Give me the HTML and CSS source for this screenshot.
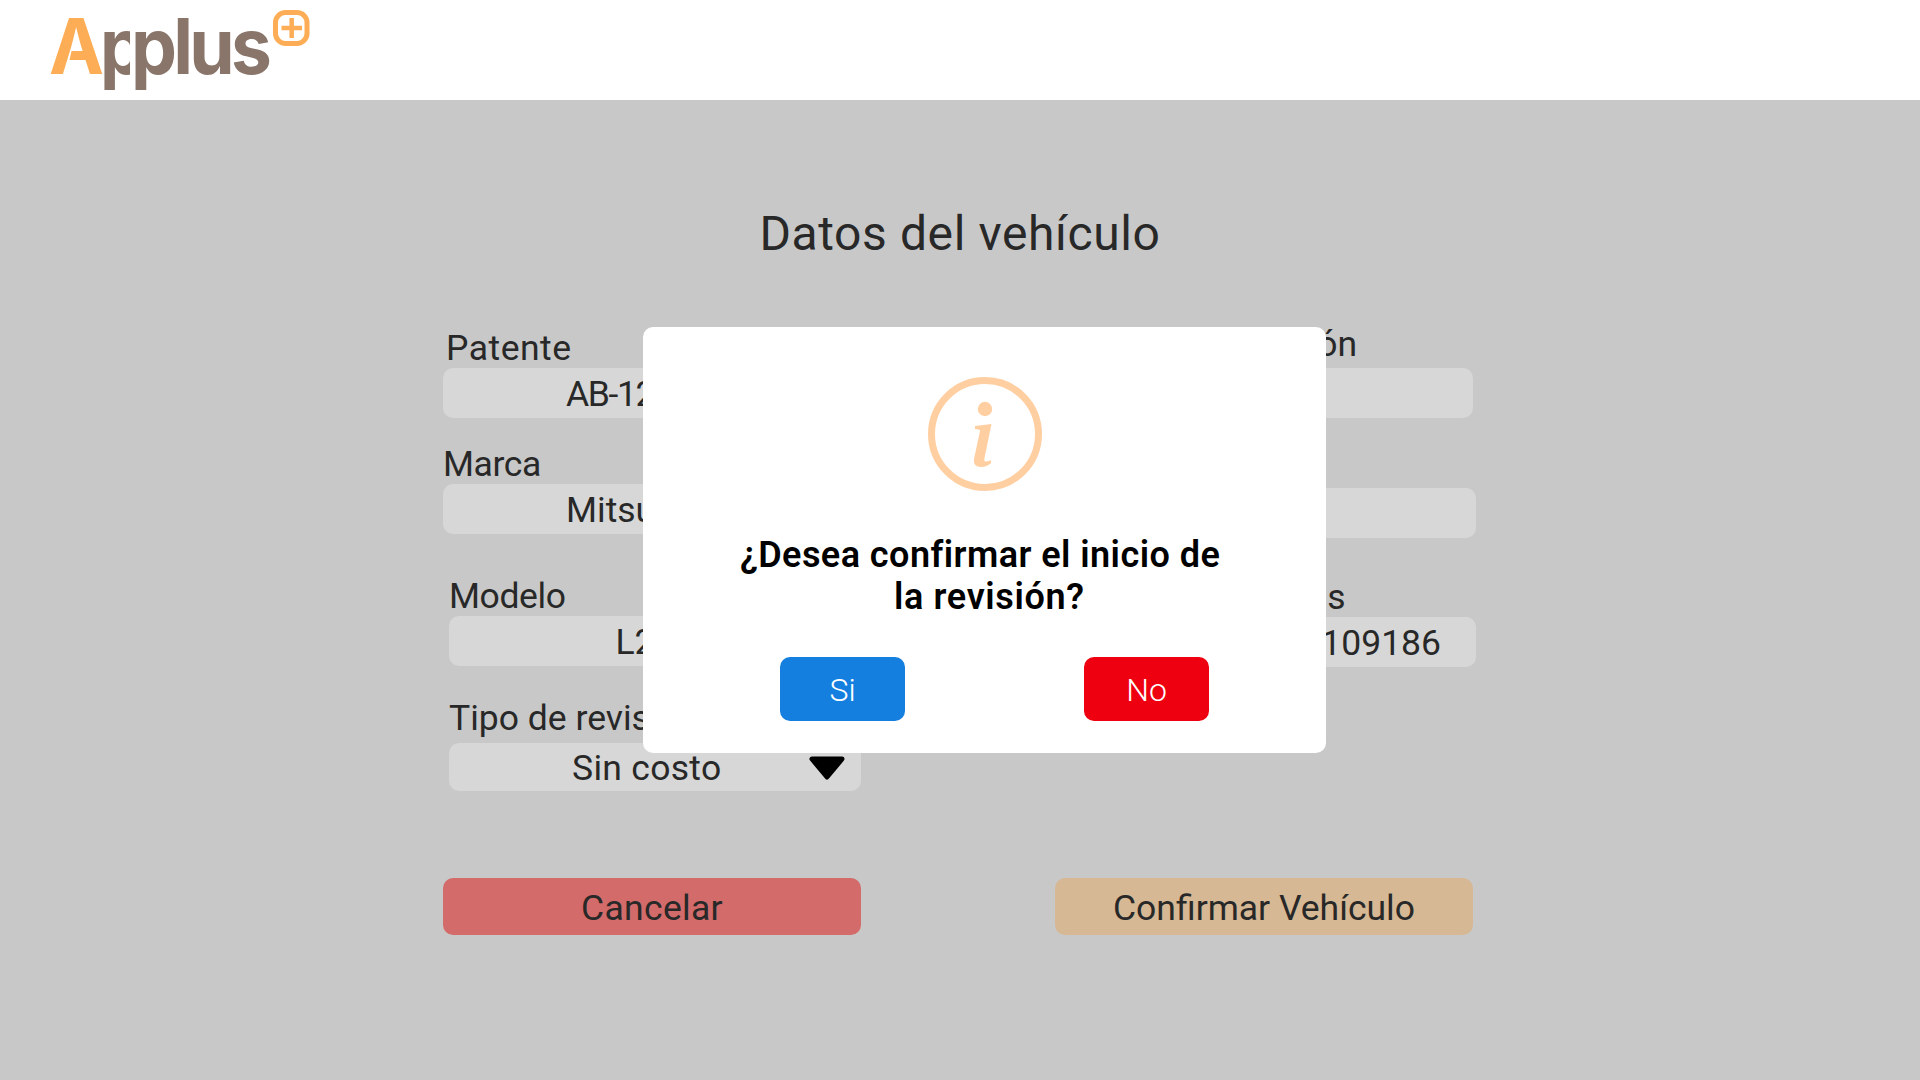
FILE: index.html
```html
<!DOCTYPE html>
<html lang="es">
<head>
<meta charset="utf-8">
<title>Applus+ | Datos del vehículo</title>
<link rel="stylesheet" href="styles.css">
</head>
<body>
<header class="topbar">
  <svg class="logo" width="262" height="92" viewBox="0 0 262 92" role="img" aria-label="Applus+">
    <defs><clipPath id="open-p"><rect x="50" y="20" width="30" height="72"/></clipPath></defs>
    <text class="logo-a" x="-1" y="74" textLength="55" lengthAdjust="spacingAndGlyphs">Λ</text>
    <path d="M21.500 51H38L42 60H19.500Z" fill="#fcad56"/>
    <g class="logo-text">
      <text x="50" y="74" textLength="45" lengthAdjust="spacingAndGlyphs" clip-path="url(#open-p)">p</text>
      <text class="logo-plus" x="81" y="74" textLength="137" lengthAdjust="spacingAndGlyphs">plus</text>
    </g>
    <rect x="225.500" y="12.500" width="31.500" height="31" rx="10" fill="none" stroke="#fcad56" stroke-width="5"/>
    <path d="M231.500 28H252M241.700 18V38" stroke="#fcad56" stroke-width="4.500"/>
  </svg>
</header>
<main class="page">
  <h1 class="title">Datos del vehículo</h1>
  <form class="form">
    <div class="column">
      <div class="field patente"><label>Patente</label><div class="input start plate">AB-12-34</div></div>
      <div class="field marca"><label>Marca</label><div class="input start">Mitsubishi</div></div>
      <div class="field modelo"><label>Modelo</label><div class="input">L200</div></div>
      <div class="field tipo"><label>Tipo de revisión</label>
        <div class="input select"><span>Sin costo</span>
          <svg class="caret" width="36" height="24" viewBox="0 0 36 24"><path d="M3 3H33L18 21Z" stroke="#000" stroke-width="5" stroke-linejoin="round"/></svg>
        </div>
      </div>
      <button type="button" class="action cancel">Cancelar</button>
    </div>
    <div class="column">
      <div class="field fabricacion"><label>Fabricación</label><div class="input"></div></div>
      <div class="field color"><label>Color</label><div class="input"></div></div>
      <div class="field kilometros"><label>Kilómetros</label><div class="input end">1109186</div></div>
      <button type="button" class="action confirm">Confirmar Vehículo</button>
    </div>
  </form>
</main>
<section class="modal" role="dialog">
  <svg class="info" width="114" height="114" viewBox="0 0 114 114">
    <circle cx="57" cy="57" r="53.500" fill="none" stroke="#ffcfa2" stroke-width="7"/>
    <circle cx="57" cy="32" r="7.200" fill="#ffcfa2"/>
    <path d="M47 49L63.500 47L56.500 81Q55.500 85 58.500 84.500Q61 84 63 83V86Q59 90 53 90Q45 90 46 82L52 54Q52.500 52.500 47 52Z" fill="#ffcfa2"/>
  </svg>
  <p class="question"><span class="line first">¿Desea confirmar el inicio de</span><span class="line second">la revisión?</span></p>
  <div class="choices">
    <button type="button" class="choice yes">Si</button>
    <button type="button" class="choice no">No</button>
  </div>
</section>
</body>
</html>
```
FILE: styles.css
```css
* { box-sizing: border-box; }
body { margin: 0; height: 1080px; overflow: hidden; background: #c8c8c8; color: #282828; font-family: Roboto, "Liberation Sans", sans-serif; font-weight: 400; }
button { border: 0; padding: 0; font: inherit; color: inherit; }

.topbar { height: 100px; padding-left: 50px; background: #fff; }
.logo { display: block; }
.logo text { font-family: Inter, sans-serif; font-size: 77px; font-weight: 700; }
.logo-a { fill: #fcad56; }
.logo-text { fill: #8a756a; }
.logo .logo-plus { letter-spacing: -4px; }

.page { height: 980px; }
.title { margin: 0; padding-top: 105px; height: 220px; text-align: center; font-size: 48px; line-height: 58px; font-weight: 400; letter-spacing: .6px; }

.form { display: grid; grid-template-columns: 418px 421px; column-gap: 194px; padding-left: 443px; font-size: 35.500px; }
.column { display: flex; flex-direction: column; height: 615px; }
.field label { display: block; height: 48px; line-height: 56px; white-space: nowrap; }
.input { display: flex; justify-content: center; align-items: center; height: 50px; padding-top: 2px; border-radius: 10px; background: #d7d7d7; }
.start { justify-content: flex-start; padding-left: 123px; }
.plate { letter-spacing: -1.4px; }
.end { justify-content: flex-end; padding-right: 35px; }

.patente label { padding-left: 3px; letter-spacing: .5px; }
.marca { margin-top: 18px; }
.marca label { letter-spacing: -.4px; }
.modelo { margin: 34px 0 0 6px; }
.modelo label { letter-spacing: -.4px; }
.tipo { margin: 27px 0 0 6px; }
.tipo label { height: 50px; line-height: 51px; }
.select { display: grid; grid-template-columns: 1fr auto; padding: 2px 16px 0 123px; height: 48px; letter-spacing: .3px; }
.caret { display: block; }
.fabricacion { width: 418px; }
.fabricacion label { line-height: 49px; padding-right: 116px; text-align: right; }
.color { margin-top: 22px; }
.kilometros { margin-top: 31px; }
.kilometros label { padding-right: 130px; text-align: right; letter-spacing: .5px; }

.action { width: 418px; height: 57px; margin-top: auto; border-radius: 10px; line-height: 60px; }
.cancel { background: #d36b6a; letter-spacing: .3px; }
.confirm { background: #d7b894; }

.modal { position: absolute; left: 643px; top: 327px; width: 683px; height: 426px; padding-top: 50px; border-radius: 10px; background: #fff; color: #000; }
.info { display: block; margin: 0 auto; }
.question { margin: 43px 0 0; font-size: 36px; font-weight: 600; line-height: 42px; }
.line { display: block; white-space: nowrap; }
.first { padding-left: 97px; letter-spacing: .45px; }
.second { padding-left: 251px; letter-spacing: .65px; }
.choices { display: flex; justify-content: space-between; margin: 39px 117px 0 137px; }
.choice { width: 125px; height: 64px; border-radius: 10px; color: #fff; font-size: 32px; font-weight: 300; line-height: 66px; }
.yes { background: #157fdf; }
.no { background: #ee0010; }
```
